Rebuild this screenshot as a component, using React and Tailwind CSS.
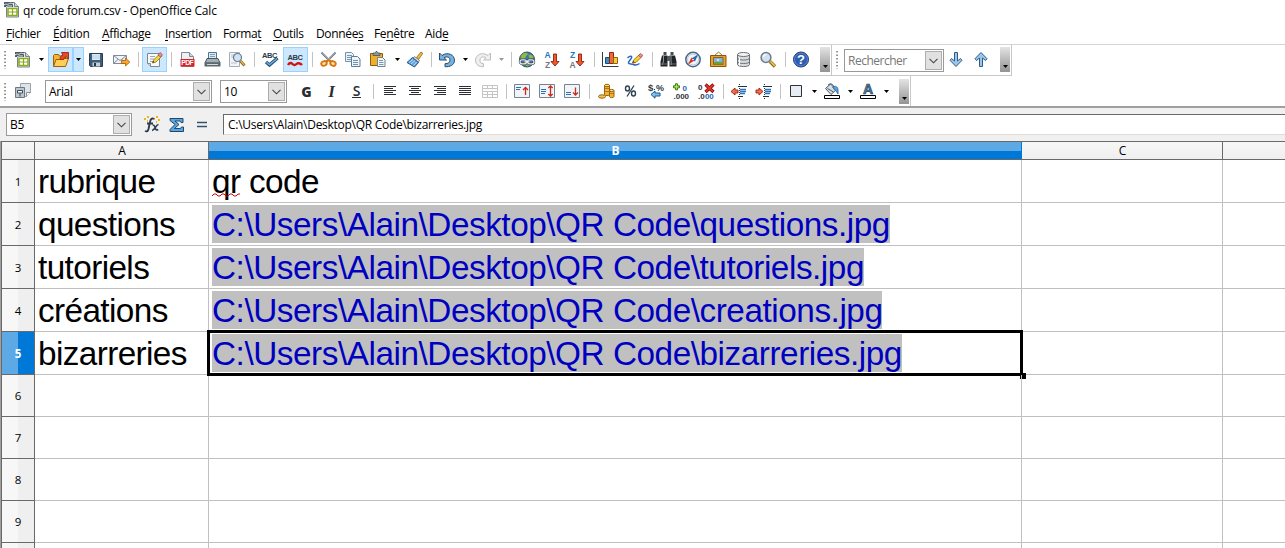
import React from 'react';

const MENUS = [
  { pre: '', key: 'F', post: 'ichier', width: 'w-[47px]' },
  { pre: '', key: 'É', post: 'dition', width: 'w-[49px]' },
  { pre: '', key: 'A', post: 'ffichage', width: 'w-[63px]' },
  { pre: '', key: 'I', post: 'nsertion', width: 'w-[58px]' },
  { pre: 'Forma', key: 't', post: '', width: 'w-[50px]' },
  { pre: '', key: 'O', post: 'utils', width: 'w-[43px]' },
  { pre: 'Donnée', key: 's', post: '', width: 'w-[58px]' },
  { pre: 'Fe', key: 'n', post: 'être', width: 'w-[51px]' },
  { pre: 'Aid', key: 'e', post: '', width: 'w-[40px]' },
];

const ROWS = [
  { n: 1, a: 'rubrique', b: 'qr code' },
  { n: 2, a: 'questions', link: 'C:\\Users\\Alain\\Desktop\\QR Code\\questions.jpg' },
  { n: 3, a: 'tutoriels', link: 'C:\\Users\\Alain\\Desktop\\QR Code\\tutoriels.jpg' },
  { n: 4, a: 'créations', link: 'C:\\Users\\Alain\\Desktop\\QR Code\\creations.jpg' },
  { n: 5, a: 'bizarreries', link: 'C:\\Users\\Alain\\Desktop\\QR Code\\bizarreries.jpg', active: true },
  { n: 6 },
  { n: 7 },
  { n: 8 },
  { n: 9 },
];

const ICONS = {
  calc: (
    <>
      <path d="M3.500 1.500h8l4 4v10.500h-12z" fill="#e9efe4" stroke="#77828a" />
      <path d="M11.500 1.500v4h4" fill="#cbd6dc" stroke="#77828a" />
      <path d="M1 1h9v5h-9z" fill="#4a5964" />
      <path d="M1 4c2-2 3 0 4.500-1s2.500-1 4.500 0M3 6c2-1.500 3-1 6-1" stroke="#e6edf0" fill="none" />
      <path d="M5 7.500h9v7h-9z" fill="#fff" stroke="#8aab1c" strokeWidth="1.500" />
      <path d="M9.500 7v8M4.500 11h10" stroke="#8aab1c" strokeWidth="1.200" />
    </>
  ),
  open: (
    <>
      <path d="M1.500 15.500V4.500l1-1h4l1 1.500h6v4" fill="#f6b52c" stroke="#a15d0a" />
      <path d="M1.500 15.500l2.500-7h3.500l1.500-1h7.500l-3 8z" fill="#ffcf55" stroke="#a15d0a" />
      <path d="M8 8.500c0-3 1.500-4 3-4.500l-1.500-2.500h7v6l-2-1.500c-2 0-2.500 1-3 2.500z" fill="#e8492a" stroke="#8c1a0a" strokeWidth=".8" />
    </>
  ),
  save: (
    <>
      <path d="M1.500 2.500h13v13h-12l-1-1z" fill="#3f5f7c" stroke="#2b3d4e" />
      <path d="M4 3h8v6h-8z" fill="#dcebf6" />
      <path d="M4 5h8M4 7h8" stroke="#b5cfe2" />
      <path d="M4.500 11.500h7.500v4h-7.500z" fill="#c4d1db" />
      <path d="M6 12h2v3h-2z" fill="#263645" />
    </>
  ),
  mail: (
    <>
      <path d="M.5 4.500h13v8h-13z" fill="#f1f3f6" stroke="#808b99" />
      <path d="M.5 4.500l6.500 5 6.500-5M.5 12.500l4.500-4M13 12l-4-3.500" fill="none" stroke="#808b99" />
      <path d="M8.500 9.500h4v-2.500l4.300 4-4.300 4v-2.500h-4z" fill="#f9a530" stroke="#a85c08" strokeWidth=".8" />
    </>
  ),
  edit: (
    <>
      <path d="M1.500 2.500h12v13h-9l-3-3z" fill="#f8fafb" stroke="#7d8892" />
      <path d="M4 5.500h5M4 8h4M4 10.500h3" stroke="#9aa6b0" />
      <path d="M1.500 12.500h3v3" fill="#dce2e7" stroke="#7d8892" />
      <path d="M6.500 12l1-3 6-6 2.500 2-6 6z" fill="#f6d534" stroke="#756714" strokeWidth=".7" />
      <path d="M12 4l2-2.500 2.500 2.200-2 2.300z" fill="#ef8c94" stroke="#9e444d" strokeWidth=".7" />
      <path d="M6.500 12l.7-2 1.300 1.200z" fill="#333" />
    </>
  ),
  pdf: (
    <>
      <path d="M2.500 1.500h8l4 4v10h-12z" fill="#edf1f3" stroke="#7d8993" />
      <path d="M10.500 1.500v4h4" fill="#cfd7dd" stroke="#7d8993" />
      <path d="M1.500 8h14v7.500h-14z" fill="#d6232a" />
      <text x="2.300" y="14.300" fontSize="6.800" fontWeight="700" fill="#fff" textLength="12.400">PDF</text>
    </>
  ),
  print: (
    <>
      <path d="M4.500 8.500v-7h8v7z" fill="#dceaf5" stroke="#54738e" />
      <path d="M6 3.500h5M6 5.500h5" stroke="#7d9ebc" />
      <path d="M1 12l2-4.500h11l2 4.500z" fill="#a3afb7" stroke="#4a545c" />
      <path d="M.5 11.500h16v4h-16z" fill="#5b6870" />
      <path d="M3 13.500h11" stroke="#d2dce2" />
    </>
  ),
  preview: (
    <>
      <path d="M.5 1.500h10v14h-10z" fill="#f2f4f6" stroke="#a4aeb8" />
      <path d="M2 4h3M2 6h2M2 12h6" stroke="#b7c2cb" />
      <circle cx="8.500" cy="6.500" r="4" fill="#cfe3f4" stroke="#66798a" strokeWidth="1.200" />
      <path d="M11.500 10l4 4.500" stroke="#8a6820" strokeWidth="2.800" />
      <path d="M11.800 10l3.300 3.800" stroke="#e6c14a" strokeWidth="1.200" />
    </>
  ),
  spell: (
    <>
      <text x="0" y="6.500" fontSize="7.500" fontWeight="700" fill="#2c3c49" textLength="15.500">ABC</text>
      <path d="M4 11l3.500 3 8-7" fill="none" stroke="#25557c" strokeWidth="3.400" />
      <path d="M4.500 11.300l3 2.400 7.500-6.200" fill="none" stroke="#6fb1e2" strokeWidth="1.400" />
    </>
  ),
  autospell: (
    <>
      <text x=".5" y="8.500" fontSize="7.500" fontWeight="700" fill="#2c3c49" textLength="15.500">ABC</text>
      <path d="M1 14c1.500-2.500 3-2.500 4.500-1s3 1 4 0 3.500-1.500 5.500 1" fill="none" stroke="#cf1414" strokeWidth="2.400" />
    </>
  ),
  cut: (
    <>
      <path d="M1.500 1.500l9 9M15.500 1.500l-9 9" stroke="#69747d" strokeWidth="2" />
      <path d="M2 1.500l8 8M15 1.500l-8 8" stroke="#d4dde2" strokeWidth=".8" />
      <ellipse cx="4" cy="12.500" rx="2.800" ry="2.200" transform="rotate(-25 4 12.500)" fill="#ffe0a8" stroke="#d87610" strokeWidth="1.900" />
      <ellipse cx="13" cy="12.500" rx="2.800" ry="2.200" transform="rotate(25 13 12.500)" fill="#ffe0a8" stroke="#d87610" strokeWidth="1.900" />
      <path d="M6 11l2.500-2 2.500 2" fill="none" stroke="#d87610" strokeWidth="2" />
    </>
  ),
  copy: (
    <>
      <path d="M.5 1.500h6l2 2v7h-8z" fill="#e8f1f7" stroke="#7992a6" />
      <path d="M2 4.500h5M2 6.500h5M2 8.500h5" stroke="#7699b4" />
      <path d="M6.500 5.500h6l2.500 2.500v7.500h-8.500z" fill="#eef5fa" stroke="#5e7c94" />
      <path d="M8 9.500h5M8 11.500h5M8 13.500h5" stroke="#6b94b4" />
    </>
  ),
  paste: (
    <>
      <path d="M.5 2.500h12v12h-12z" fill="#edb02c" stroke="#8c5b0c" />
      <path d="M3 3.500v-1.500h2l1-1.500h1l1 1.500h2v2.500h-7z" fill="#8c969e" stroke="#495058" strokeWidth=".8" />
      <path d="M7.500 6.500h5l2.500 2.500v6.500h-7.500z" fill="#f1f6fa" stroke="#6c8498" />
      <path d="M9 9.500h4M9 11.500h4.500M9 13.500h4.500" stroke="#7b9ab1" />
    </>
  ),
  brush: (
    <>
      <path d="M9.500 6.500l4.500-5.500 1.800 1.300-4 6z" fill="#efbb3d" stroke="#8d6612" strokeWidth=".8" />
      <path d="M7.500 5.500l5 4-1.500 2-5-4.500z" fill="#d3dbe1" stroke="#626f79" strokeWidth=".8" />
      <path d="M5.500 6.500l6 5-4 4.500-7.500-4.500z" fill="#5ca1db" stroke="#245682" />
      <path d="M2 11.500l4-3M4 13l4-3.500M6.500 14.500l3-3.500" stroke="#c1e0f6" />
    </>
  ),
  undo: (
    <path d="M.5 2v7h7l-2.500-2.300c3-1.700 6-.5 6 2.300s-2 3.700-5 3.700v3c5 .3 9.500-1.700 9.500-6.500 0-5.500-7-8.700-12.500-4.700z" fill="#77b1de" stroke="#2a4c6b" />
  ),
  redo: (
    <path d="M15.500 2v7h-7l2.500-2.300c-3-1.700-6-.5-6 2.300s1 3.700 3.500 3.700v3c-4 .3-8-1.700-8-6.500 0-5.500 7-8.700 12.500-4.700z" fill="#efefef" stroke="#bdbdbd" />
  ),
  globe: (
    <>
      <circle cx="8" cy="8.500" r="7.500" fill="#3d76ae" stroke="#3e5360" />
      <path d="M2.500 4c2-2.500 5-3 6-1.500s-2 2-2 4-3 2-5 1zM9.500 4c3-1 5 1 5 3l-4 1zM3.500 12l5-1 3 2-3 2.500z" fill="#8cbc42" />
      <rect x="1" y="8.800" width="6.500" height="4" rx="2" fill="none" stroke="#3c474e" strokeWidth="2.400" />
      <rect x="8.500" y="8.800" width="6.500" height="4" rx="2" fill="none" stroke="#3c474e" strokeWidth="2.400" />
      <rect x="1" y="8.800" width="6.500" height="4" rx="2" fill="none" stroke="#e8eef0" strokeWidth="1.200" />
      <rect x="8.500" y="8.800" width="6.500" height="4" rx="2" fill="none" stroke="#e8eef0" strokeWidth="1.200" />
      <path d="M5.500 10.800h5" stroke="#e8eef0" strokeWidth="1.200" />
    </>
  ),
  sortAsc: (
    <>
      <text x=".5" y="7" fontSize="8.500" fontWeight="700" fill="#2478bd">A</text>
      <text x="1" y="16.500" fontSize="8.500" fontWeight="700" fill="#777">Z</text>
      <path d="M9.500 3h3v7.500h2.500l-4 4.500-4-4.500h2.500z" fill="#f0592e" stroke="#8b2108" strokeWidth=".9" />
    </>
  ),
  sortDesc: (
    <>
      <text x="1" y="7" fontSize="8.500" fontWeight="700" fill="#2478bd">Z</text>
      <text x=".5" y="16.500" fontSize="8.500" fontWeight="700" fill="#777">A</text>
      <path d="M9.500 3h3v7.500h2.500l-4 4.500-4-4.500h2.500z" fill="#f0592e" stroke="#8b2108" strokeWidth=".9" />
    </>
  ),
  chart: (
    <>
      <path d="M.5 1v14.500h16" fill="none" stroke="#333a42" />
      <path d="M3.500 6.500h4v6h-4z" fill="#3c8fce" stroke="#1d4b73" />
      <path d="M7.500 1.500h4v11h-4z" fill="#ee6a3b" stroke="#8c280d" />
      <path d="M11.500 6.500h4v6h-4z" fill="#f9c83d" stroke="#8d640c" />
    </>
  ),
  draw: (
    <>
      <path d="M.5 7c2.500-2.500 5-2 4 0s-3.500 3.500-3 5 3 .500 5 1.500 4 .5 6-1" fill="none" stroke="#2b67c2" strokeWidth="1.500" />
      <path d="M5.500 12l1-3 6-5.500 2.500 2-6 6z" fill="#f6cd38" stroke="#7e6411" strokeWidth=".8" />
      <path d="M11.500 4.500l2-2 2.300 1.800-2 2.200z" fill="#ef8c94" stroke="#9e444d" strokeWidth=".7" />
      <path d="M5.500 12l.8-2 1.400 1.300z" fill="#333" />
    </>
  ),
  binoculars: (
    <>
      <path d="M3.500 1h3v3h-3zM10.500 1h3v3h-3z" fill="#474c50" />
      <path d="M2 4.500h5.500v11h-7v-5zM9.500 4.500h5.500l1.500 6v5h-7z" fill="#202427" />
      <path d="M7 5h3v5h-3z" fill="#53595e" />
      <path d="M3.500 5v5l-1 4M11 5v5l.5 4" stroke="#8d969c" fill="none" />
      <path d="M1 13h6M10 13h6" stroke="#666f75" />
    </>
  ),
  compass: (
    <>
      <circle cx="8" cy="8.500" r="7.200" fill="#eef4f9" stroke="#4d6883" strokeWidth="1.500" />
      <circle cx="8" cy="8.500" r="5.500" fill="none" stroke="#b6cbdc" />
      <path d="M3 3.500l7 3-3 3.500z" fill="#2466b0" transform="rotate(90 8 8.500)" />
      <path d="M3 13.500l3.500-7 3 3z" fill="#d6301c" />
      <circle cx="8" cy="8.500" r=".8" fill="#fff" />
    </>
  ),
  gallery: (
    <>
      <path d="M4.500 4.500l4-3.500 4 3.500" fill="none" stroke="#8d7339" />
      <path d="M.5 4.500h15.500v11h-15.500z" fill="#e7a02c" stroke="#925507" />
      <path d="M3.500 6.500h9.500v7h-9.500z" fill="#7eb6e2" stroke="#795014" strokeWidth=".8" />
      <path d="M4 11.500c3-2 6 1 8.500-1v3h-8.500z" fill="#6f9a36" />
      <circle cx="8" cy="9" r="1" fill="#fff5a1" />
    </>
  ),
  database: (
    <>
      <path d="M2.500 3.500v10c0 2.700 12 2.700 12 0v-10" fill="#d8dbdd" stroke="#6b7074" />
      <ellipse cx="8.500" cy="3.500" rx="6" ry="2" fill="#f1f2f3" stroke="#6b7074" />
      <path d="M2.500 7c0 2.700 12 2.700 12 0M2.500 10.500c0 2.700 12 2.700 12 0" fill="none" stroke="#6b7074" />
      <path d="M4.500 6.500v8" stroke="#fff" />
    </>
  ),
  zoom: (
    <>
      <circle cx="6" cy="6.500" r="4.900" fill="#cfe1f1" stroke="#6e7c87" strokeWidth="1.500" />
      <path d="M3.500 6c0-2 1.500-2.500 3-2.500" fill="none" stroke="#fff" strokeWidth="1.200" />
      <path d="M10 10.500l5 5" stroke="#8c681a" strokeWidth="3.400" />
      <path d="M10.500 10.500l4.300 4.500" stroke="#f0c74c" strokeWidth="1.700" />
    </>
  ),
  help: (
    <>
      <circle cx="8" cy="8.500" r="7.500" fill="#2d5db2" stroke="#1b3770" />
      <circle cx="8" cy="8.500" r="6.500" fill="none" stroke="#7597d1" strokeWidth=".7" />
      <text x="8" y="13.200" fontSize="13" fontWeight="700" fill="#fff" textAnchor="middle">?</text>
    </>
  ),
  down: <path d="M6.500 1.500h3v8.500l3-2.500 1.500 1.800-6 6.200-6-6.200 1.500-1.800 3 2.500z" fill="#98c7eb" stroke="#315b82" />,
  up: <path d="M6.500 15.500h3v-8.500l3 2.500 1.500-1.800-6-6.200-6 6.200 1.500 1.800 3-2.500z" fill="#98c7eb" stroke="#315b82" />,
  styles: (
    <>
      <path d="M5.500 .5h10v9l-4 4h-6z" fill="#dfe4e9" stroke="#98a2ab" />
      <path d="M11.500 13.500v-4h4" fill="#fff" stroke="#87919a" />
      <path d="M.5 4.500h9v10h-9z" fill="#bcc6cf" stroke="#6b7883" />
      <path d="M2.500 7.500h5v2.500h-5zM5 10.500v3" fill="#fff" stroke="#3d4b57" />
    </>
  ),
  left: <path d="M2 3.500h12M2 5.500h9M2 7.500h12M2 9.500h9M2 11.500h12" stroke="#2c2f34" />,
  center: <path d="M2 3.500h12M4 5.500h8M2 7.500h12M4 9.500h8M2 11.500h12" stroke="#2c2f34" />,
  right: <path d="M2 3.500h12M5 5.500h9M2 7.500h12M5 9.500h9M2 11.500h12" stroke="#2c2f34" />,
  justify: <path d="M2 3.500h12M2 5.500h12M2 7.500h12M2 9.500h12M2 11.500h12" stroke="#2c2f34" />,
  merge: <path d="M.5 2.500h15v12h-15zM.5 5.500h15M.5 8.500h15M.5 11.500h15M5.500 2.500v3M10.500 2.500v3M5.500 8.500v6M10.500 8.500v6" fill="none" stroke="#c4c4c4" />,
  alignTop: (
    <>
      <path d="M.5 1.500h15v13h-15z" fill="#f1f5f9" stroke="#78838e" />
      <path d="M2 4.500h5M2 6.500h4" stroke="#2c71b4" />
      <path d="M11.500 12V4.500M9 7l2.500-2.500 2.500 2.500" stroke="#cb2b1c" strokeWidth="1.300" fill="none" />
    </>
  ),
  alignMid: (
    <>
      <path d="M.5 1.500h15v13h-15z" fill="#f1f5f9" stroke="#78838e" />
      <path d="M2 6.500h5M2 8.500h5M2 10.500h4" stroke="#2c71b4" />
      <path d="M11.500 13V3M9.300 5l2.200-2 2.200 2M9.300 11l2.200 2 2.200-2" stroke="#cb2b1c" strokeWidth="1.300" fill="none" />
    </>
  ),
  alignBottom: (
    <>
      <path d="M.5 1.500h15v13h-15z" fill="#f1f5f9" stroke="#78838e" />
      <path d="M2 9.500h5M2 11.500h5" stroke="#2c71b4" />
      <path d="M11.500 4.500V12M9 9.500l2.500 2.500 2.500-2.500" stroke="#cb2b1c" strokeWidth="1.300" fill="none" />
    </>
  ),
  coins: (
    <>
      <path d="M6.500 2.500v9c0 1.500 5 1.500 5 0v-9z" fill="#f2b233" stroke="#99620b" />
      <ellipse cx="9" cy="2.500" rx="2.500" ry="1.200" fill="#ffe07b" stroke="#99620b" />
      <path d="M11.500 7.500v6c0 1.500 4.500 1.500 4.500 0v-6z" fill="#f2b233" stroke="#99620b" />
      <ellipse cx="13.700" cy="7.500" rx="2.200" ry="1.100" fill="#ffe07b" stroke="#99620b" />
      <ellipse cx="4" cy="13.500" rx="3.500" ry="1.700" fill="#f5c34e" stroke="#99620b" />
      <path d="M6.500 5.500h5M6.500 8.500h5M12 10.500h4" stroke="#99620b" strokeWidth=".7" />
    </>
  ),
  percent: (
    <>
      <ellipse cx="4.500" cy="5.500" rx="2" ry="2.500" stroke="#2f4150" strokeWidth="1.400" />
      <ellipse cx="10.500" cy="10.500" rx="2" ry="2.500" stroke="#2f4150" strokeWidth="1.400" />
      <path d="M11 2.500l-7 11" stroke="#2f4150" strokeWidth="1.300" />
    </>
  ),
  standard: (
    <>
      <text x="0" y="7.500" fontSize="9.500" fontWeight="700" fill="#2d3b45">$</text>
      <text x="8" y="7.500" fontSize="9" fontWeight="700" fill="#2d3b45">%</text>
      <path d="M3 11.500l4-3.500v2h5v3h-5v2.200z" fill="#82c2ee" stroke="#1c578d" />
      <path d="M6 6.500h1" stroke="#2d3b45" />
    </>
  ),
  addDecimal: (
    <>
      <path d="M2.500 .8h2v2h2v2h-2v2h-2v-2h-2v-2h2z" fill="#b2e65d" stroke="#397e0d" />
      <text x="9.500" y="7.500" fontSize="8" fontWeight="700" fill="#2f66b2">0</text>
      <text x=".5" y="16" fontSize="8" fontWeight="700" fill="#2b3742" textLength="15.500">.000</text>
    </>
  ),
  delDecimal: (
    <>
      <text x="0" y="7" fontSize="8" fontWeight="700" fill="#2b3742">0</text>
      <text x="0" y="16" fontSize="8" fontWeight="700" fill="#2b3742">.0</text>
      <text x="6.900" y="16" fontSize="8" fontWeight="700" fill="#2f66b2">00</text>
      <path d="M7.500 1.500l8 7.500M15.500 1.500l-8 7.500" stroke="#8c0b0b" strokeWidth="3.200" />
      <path d="M8 2l7 6.500M15 2l-7 6.500" stroke="#e73c32" strokeWidth="1.600" />
    </>
  ),
  outdent: (
    <>
      <path d="M8.500 1v15" stroke="#26323b" strokeDasharray="1 1" />
      <path d="M7 3.500h9M7 13.500h5" stroke="#26323b" />
      <path d="M9 6.500h6M9 8.500h6M9 10.500h5" stroke="#2c76bd" strokeWidth="1.400" />
      <path d="M0 8.500l4-3.500v2h3v3h-3v2z" fill="#f2704a" stroke="#9c220c" strokeWidth=".9" />
    </>
  ),
  indent: (
    <>
      <path d="M8.500 1v15" stroke="#26323b" strokeDasharray="1 1" />
      <path d="M7 3.500h9M7 13.500h6" stroke="#26323b" />
      <path d="M9 6.500h6M9 8.500h6M9 10.500h5" stroke="#2c76bd" strokeWidth="1.400" />
      <path d="M7 8.500l-4-3.500v2h-3v3h3v2z" fill="#f2704a" stroke="#9c220c" strokeWidth=".9" />
    </>
  ),
  border: <path d="M2.500 2.500h11v11h-11z" fill="#e7edf3" stroke="#2d3339" />,
  fill: (
    <>
      <path d="M1.500 5.500l5-4.500 6 5.500-5.500 5z" fill="#d6dfe6" stroke="#495762" />
      <path d="M4 2c3-2.500 7 0 6 4.500M3.500 5.500l6 3.500" fill="none" stroke="#495762" />
      <path d="M8.500 4c5-2 6 1 5.500 7l-2-3z" fill="#58a3dd" stroke="#265e8f" strokeWidth=".8" />
      <path d="M.5 12.500h15v3h-15z" fill="#fff" stroke="#000" />
    </>
  ),
  fontColor: (
    <>
      <text x="8" y="11" fontSize="14" fontWeight="700" fill="#4c7fa8" stroke="#263c4f" strokeWidth=".7" textAnchor="middle">A</text>
      <path d="M.5 12.500h15v3h-15z" fill="#fff" stroke="#000" />
    </>
  ),
  fx: (
    <>
      <path d="M1 3h2M4 1h2M8 3h1M13 1h2M15 4h2M11 3h1M4 5h1M13 6h1" stroke="#edb51e" strokeWidth="1.800" />
      <path d="M11 3c-2-1.500-3.300 0-4 3l-1.500 7c-.5 2-1.500 3-3.500 2M4 7.500h6" stroke="#2b3d4d" strokeWidth="1.900" />
      <path d="M9.500 9c2-.5 2 1 2.700 3s1.300 2.500 3 1.500M15.500 8.500c-2.500 0-3.500 5.500-6.500 6" stroke="#2b3d4d" strokeWidth="1.600" />
    </>
  ),
  sum: <path d="M2 2.500h13v4h-2l-1-1.500h-5l4 3.500-4.500 4h6l1-1.500h2v4.500h-13.500v-2l5-5-5-4z" fill="#5aa5e0" stroke="#20486c" />,
  equals: <path d="M4 6.500h10M4 10.500h10" stroke="#35506a" strokeWidth="1.600" />,
};

function Icon({ name }) {
  return (
    <svg
      width="17"
      height="17"
      viewBox="0 0 17 17"
      fill="none"
      fontFamily="Liberation Sans, Arial, sans-serif"
      className="shrink-0 overflow-visible"
    >
      {ICONS[name]}
    </svg>
  );
}

function Tool({ name, on, children }) {
  return (
    <div
      className={`w-[25px] h-[25px] shrink-0 flex items-center justify-center ${
        on ? 'bg-[#cce8ff] outline outline-1 -outline-offset-1 outline-[#99d1ff]' : ''
      }`}
    >
      {name ? <Icon name={name} /> : children}
    </div>
  );
}

function Arrow({ width = 'w-3', on, dim }) {
  return (
    <div
      className={`${width} h-[25px] shrink-0 flex items-center justify-center ${
        on ? 'bg-[#cce8ff] outline outline-1 -outline-offset-1 outline-[#99d1ff]' : ''
      }`}
    >
      <svg width="5" height="3" viewBox="0 0 5 3">
        <path d="M0 0h5L2.500 3z" fill={dim ? '#9a9a9a' : '#000'} />
      </svg>
    </div>
  );
}

function Sep({ width = 'w-2' }) {
  return (
    <div className={`${width} h-[25px] shrink-0 flex items-center justify-center`}>
      <div className="w-px h-[15px] bg-[#c3c3c3]" />
    </div>
  );
}

function Grip() {
  return (
    <svg width="2" height="18" viewBox="0 0 2 18" className="shrink-0">
      <path d="M1 0v18" stroke="#777" strokeWidth="1.500" strokeDasharray="1.500 2" />
    </svg>
  );
}

function Combo({ text, width, dim }) {
  return (
    <div className={`${width} h-[23px] shrink-0 border border-[#999] bg-white flex items-center justify-between pl-[3px] pr-px`}>
      <span className={`text-xs whitespace-pre ${dim ? 'text-[#777] tracking-[-0.5px]' : 'text-black tracking-[-0.3px]'}`}>{text}</span>
      <div className="w-[17px] h-[19px] bg-[#e1e1e1] border border-[#adadad] flex items-center justify-center">
        <svg width="9" height="6" viewBox="0 0 9 6">
          <path d="M.5.8l4 4 4-4" fill="none" stroke="#444" strokeWidth="1.100" />
        </svg>
      </div>
    </div>
  );
}

function ToolbarEnd() {
  return (
    <div className="w-[10px] h-[25px] shrink-0 bg-linear-to-b from-[#e4e4e4] to-[#949494] flex items-end justify-center pb-1">
      <svg width="5" height="3" viewBox="0 0 5 3">
        <path d="M0 0h5L2.500 3z" fill="#000" />
      </svg>
    </div>
  );
}

function StandardBar() {
  return (
    <div className="flex w-[1012px] h-[31px] pl-1 border-b border-r border-[#c8c8c8]">
      <div className="flex items-start pt-[2px] w-[828px] border-r border-[#c8c8c8]">
        <div className="w-[6px] h-[25px] flex items-center"><Grip /></div>
        <Tool name="calc" />
        <Arrow width="w-[13px]" />
        <Tool name="open" on />
        <Arrow width="w-[11px]" on />
        <Tool name="save" />
        <Tool name="mail" />
        <Sep />
        <Tool name="edit" on />
        <Sep />
        <Tool name="pdf" />
        <Tool name="print" />
        <Tool name="preview" />
        <Sep />
        <Tool name="spell" />
        <Tool name="autospell" on />
        <Sep />
        <Tool name="cut" />
        <Tool name="copy" />
        <Tool name="paste" />
        <Arrow />
        <Tool name="brush" />
        <Sep width="w-[7px]" />
        <Tool name="undo" />
        <Arrow width="w-[11px]" />
        <Tool name="redo" />
        <Arrow width="w-[11px]" dim />
        <Sep width="w-[8px]" />
        <Tool name="globe" />
        <Tool name="sortAsc" />
        <Tool name="sortDesc" />
        <Sep />
        <Tool name="chart" />
        <Tool name="draw" />
        <Sep />
        <Tool name="binoculars" />
        <Tool name="compass" />
        <Tool name="gallery" />
        <Tool name="database" />
        <Tool name="zoom" />
        <Sep />
        <Tool name="help" />
        <div className="ml-[6px]"><ToolbarEnd /></div>
      </div>
      <div className="flex items-start pt-[2px] pl-1">
        <div className="w-2 h-[25px] flex items-center"><Grip /></div>
        <div className="pt-[2px]"><Combo text="Rechercher" width="w-[100px]" dim /></div>
        <Tool name="down" />
        <Tool name="up" />
        <div className="ml-[6px]"><ToolbarEnd /></div>
      </div>
    </div>
  );
}

function FormatBar() {
  return (
    <div className="flex items-start w-[911px] h-[30px] pt-[3px] pl-1 border-r border-[#c8c8c8]">
      <div className="w-[7px] h-[25px] flex items-center"><Grip /></div>
      <Tool name="styles" />
      <div className="pt-px ml-[9px]"><Combo text="Arial" width="w-[167px]" /></div>
      <div className="pt-px ml-2 mr-[7px]"><Combo text="10" width="w-[67px]" /></div>
      <Tool><span className="text-[14px] font-extrabold text-[#2a2e34]">G</span></Tool>
      <Tool><span className="text-[17px] leading-[17px] italic font-bold text-[#2a2e34] font-['Liberation_Serif',serif]">I</span></Tool>
      <Tool><span className="text-[14px] leading-[13px] -mt-[2px] px-px font-semibold text-[#2a2e34] border-b border-[#2a2e34]">S</span></Tool>
      <Sep width="w-[9px]" />
      <Tool name="left" />
      <Tool name="center" />
      <Tool name="right" />
      <Tool name="justify" />
      <Tool name="merge" />
      <Sep width="w-[7px]" />
      <Tool name="alignTop" />
      <Tool name="alignMid" />
      <Tool name="alignBottom" />
      <Sep width="w-[9px]" />
      <Tool name="coins" />
      <Tool name="percent" />
      <Tool name="standard" />
      <Tool name="addDecimal" />
      <Tool name="delDecimal" />
      <Sep />
      <Tool name="outdent" />
      <Tool name="indent" />
      <Sep width="w-[7px]" />
      <Tool name="border" />
      <Arrow width="w-[11px]" />
      <Tool name="fill" />
      <Arrow width="w-[11px]" />
      <Tool name="fontColor" />
      <Arrow width="w-[11px]" />
      <div className="ml-[7px]"><ToolbarEnd /></div>
    </div>
  );
}

function FormulaBar() {
  return (
    <div className="flex items-start h-[35px] pl-[6px] pt-[5px] bg-[#f0f0f0] border-t-2 border-[#a0a0a0]">
      <Combo text="B5" width="w-[126px]" />
      <div className="flex -mt-px ml-[7px]">
        <Tool name="fx" />
        <Tool name="sum" />
        <Tool name="equals" />
      </div>
      <div className="flex-1 h-[21px] mt-px ml-[9px] bg-white border-t border-l border-[#696969] border-b border-b-[#e3dcd6] flex items-center pl-1">
        <span className="text-xs text-black whitespace-pre tracking-[-0.28px]">C:\Users\Alain\Desktop\QR Code\bizarreries.jpg</span>
      </div>
    </div>
  );
}

function ColumnHead({ label, width, active }) {
  return (
    <div
      className={`${width} h-full shrink-0 flex items-center justify-center pl-px text-xs ${
        active
          ? 'bg-linear-to-b from-[#5ca9e6] from-50% to-[#0078d7] to-50% text-white font-bold border-r border-[#0078d7]'
          : 'bg-linear-to-b from-[#f7f7f7] to-[#efefef] text-black'
      } ${!active && width !== 'flex-1' ? 'border-r border-[#696969]' : ''}`}
    >
      {label}
    </div>
  );
}

function Row({ row }) {
  return (
    <div className={`flex shrink-0 ${row.n <= 5 ? 'h-[43px]' : 'h-[42px]'}`}>
      <div
        className={`w-[33px] shrink-0 border-r border-b border-[#696969] flex items-center justify-center text-[11.500px] tracking-normal font-['Open_Sans',sans-serif] ${
          row.active
            ? 'bg-linear-to-r from-[#5ca9e6] from-50% to-[#0078d7] to-50% text-white font-bold'
            : 'bg-linear-to-r from-[#f7f7f7] from-50% to-[#efefef] to-50% text-black'
        }`}
      >
        {row.n}
      </div>
      <div className="w-[174px] shrink-0 border-r border-b border-[#c0c0c0] pl-[3px] pt-[2px] tracking-[-0.6px]">
        {row.a}
      </div>
      <div className="relative w-[813px] shrink-0 border-r border-b border-[#c0c0c0] pl-[3px] pt-[2px]">
        {row.b && (
          <>
            <span className="tracking-[-0.6px]">{row.b}</span>
            <svg className="absolute left-[3px] top-[33px]" width="30" height="4" viewBox="0 0 30 4">
              <path d="M0 3l2-2 2 0 2 2 2 0 2-2 2 0 2 2 2 0 2-2 2 0 2 2 2 0 2-2 2 0" fill="none" stroke="#e00000" />
            </svg>
          </>
        )}
        {row.link && (
          <span className="inline-block h-[38px] bg-[#c0c0c0] text-[#0000c0] tracking-[-0.45px]">{row.link}</span>
        )}
        {row.active && (
          <div className="absolute -left-[2px] -top-[2px] w-[816px] h-[46px] border-3 border-black">
            <div className="absolute -right-[6px] -bottom-[6px] w-[6px] h-[6px] bg-black" />
          </div>
        )}
      </div>
      <div className="w-[201px] shrink-0 border-r border-b border-[#c0c0c0]" />
      <div className="flex-1 border-b border-[#c0c0c0]" />
    </div>
  );
}

function Sheet() {
  return (
    <div className="flex-1 min-h-0 flex border-l border-[#a0a0a0]">
      <div className="flex flex-col flex-1 overflow-hidden border-l border-t border-[#696969]">
        <div className="flex h-[18px] shrink-0 border-b border-[#696969]">
          <ColumnHead width="w-[33px]" />
          <ColumnHead label="A" width="w-[174px]" />
          <ColumnHead label="B" width="w-[813px]" active />
          <ColumnHead label="C" width="w-[201px]" />
          <ColumnHead width="flex-1" />
        </div>
        <div className="flex flex-col font-['Liberation_Sans',Arial,sans-serif] text-[33.300px] leading-[39px] text-black whitespace-pre">
          {ROWS.map((row) => (
            <Row key={row.n} row={row} />
          ))}
        </div>
        {/* top edge of the next row */}
        <div className="flex flex-1">
          <div className="w-[33px] border-r border-[#696969] bg-linear-to-r from-[#f7f7f7] from-50% to-[#efefef] to-50%" />
          <div className="w-[174px] border-r border-[#c0c0c0]" />
          <div className="w-[813px] border-r border-[#c0c0c0]" />
          <div className="w-[201px] border-r border-[#c0c0c0]" />
        </div>
      </div>
    </div>
  );
}

export default function App() {
  return (
    <div className="w-[1285px] h-[548px] overflow-hidden flex flex-col bg-white font-['Open_Sans',sans-serif] text-black">
      <div className="flex items-center h-[22px] pl-[3px] gap-[3px] shrink-0">
        <div className="-mt-[3px]"><Icon name="calc" /></div>
        <span className="text-xs tracking-[-0.2px] whitespace-pre">qr code forum.csv - OpenOffice Calc</span>
      </div>
      <div className="flex items-center h-[22px] pt-px pl-[6px] shrink-0 text-xs tracking-[-0.35px]">
        {MENUS.map((m) => (
          <div key={m.pre + m.key} className={m.width}>
            {m.pre}
            <span className="underline underline-offset-2">{m.key}</span>
            {m.post}
          </div>
        ))}
      </div>
      <div className="h-[62px] shrink-0 border-t border-[#d4d4d4]">
        <StandardBar />
        <FormatBar />
      </div>
      <FormulaBar />
      <Sheet />
    </div>
  );
}
